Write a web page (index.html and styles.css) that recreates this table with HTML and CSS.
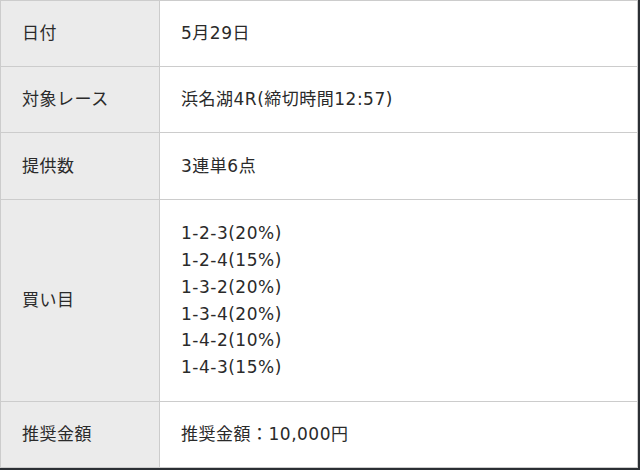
FILE: index.html
```html
<!DOCTYPE html>
<html lang="ja">
<head>
<meta charset="utf-8">
<link rel="stylesheet" href="styles.css">
</head>
<body>
<table class="info">
  <tr class="r1"><th>日付</th><td>5月29日</td></tr>
  <tr class="r2"><th>対象レース</th><td>浜名湖4R(締切時間12:57)</td></tr>
  <tr class="r3"><th>提供数</th><td>3連単6点</td></tr>
  <tr class="r4"><th>買い目</th><td class="multi">1-2-3(20%)<br>1-2-4(15%)<br>1-3-2(20%)<br>1-3-4(20%)<br>1-4-2(10%)<br>1-4-3(15%)</td></tr>
  <tr class="r5"><th>推奨金額</th><td>推奨金額：10,000円</td></tr>
</table>
</body>
</html>
```
FILE: styles.css
```css
html, body {
  margin: 0;
  padding: 0;
  background: #2b2f34;
}
.info {
  border-collapse: collapse;
  width: 638px;
  background: #fff;
  font-family: "DejaVu Sans", "Noto Sans CJK JP", sans-serif;
  font-size: 17px;
  letter-spacing: 0.5px;
  color: #2a2a2a;
}
.info th, .info td {
  border: 1px solid #cccccc;
  padding: 0 21px;
  vertical-align: middle;
  text-align: left;
  font-weight: normal;
  line-height: 26.8px;
}
.info th {
  width: 116px;
  background: #ebebeb;
}
.r1 th, .r1 td { height: 65px; }
.r2 th, .r2 td { height: 65px; }
.r3 th, .r3 td { height: 66px; }
.r4 th, .r4 td { height: 201px; }
.r5 th, .r5 td { height: 65px; }
```
